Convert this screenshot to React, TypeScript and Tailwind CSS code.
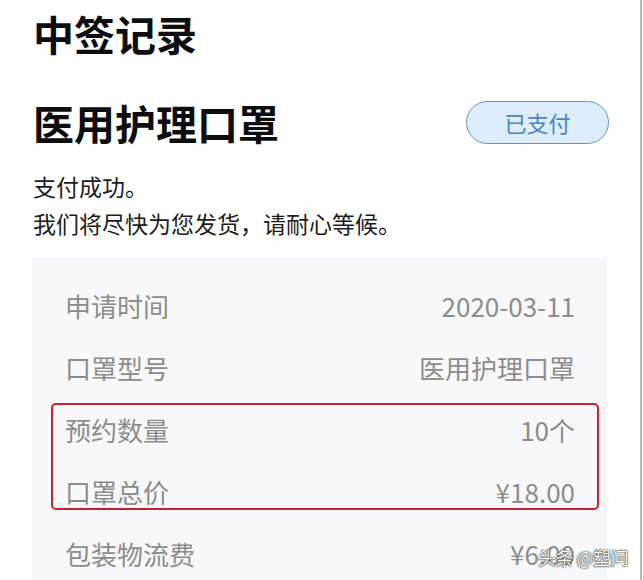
import React from 'react';

const rows = [
  { label: '申请时间', value: '2020-03-11' },
  { label: '口罩型号', value: '医用护理口罩' },
  { label: '预约数量', value: '10个' },
  { label: '口罩总价', value: '¥18.00' },
  { label: '包装物流费', value: '¥6.00' },
];

export default function App() {
  return (
    <div
      className="relative w-[643px] h-[580px] overflow-hidden bg-white"
      style={{ fontFamily: '"Noto Sans CJK SC", "Noto Sans", sans-serif' }}
    >
      {/* right edge line from the original capture */}
      <div className="absolute top-0 right-0 h-full w-[3px] bg-white">
        <div className="h-full w-[2px] bg-[#b9b9b9]" />
      </div>

      <div className="pl-[33px] pr-[34px]">
        <h1 className="pt-[10px] h-[86px] text-[41px] leading-[46px] font-bold text-[#0d0d0d]">中签记录</h1>

        <div className="flex items-center justify-between h-[72px]">
          <h2 className="text-[41px] leading-[46px] font-bold text-[#0d0d0d]">医用护理口罩</h2>
          <span className="flex items-center justify-center w-[143px] h-[43px] rounded-full border-[1.5px] border-[#5e93c6] bg-[#deedfb] text-[22px] text-[#4486c6]">
            已支付
          </span>
        </div>

        <div className="pt-[10px] text-[23px] leading-[37px] text-[#1c1c1c]">
          <p>支付成功。</p>
          <p>我们将尽快为您发货，请耐心等候。</p>
        </div>
      </div>

      <div className="relative ml-[32px] mr-[36px] mt-[16px] pt-[16px] pl-[33px] pr-[32px] bg-[#f8f8fa]">
        {rows.map((r) => (
          <div key={r.label} className="flex items-center justify-between h-[62px] text-[26px] text-[#8c8c8c]">
            <span>{r.label}</span>
            <span>{r.value}</span>
          </div>
        ))}
        {/* red highlight annotation */}
        <div className="absolute left-[19px] top-[145px] w-[548px] h-[107px] rounded-[5px] border-2 border-[#c9202b]" />
      </div>

      <div className="absolute right-[15px] bottom-[14px] text-[18px] leading-none tracking-[-0.5px] text-white [text-shadow:0_0_1px_#333,0_0_2px_#333,0_0_1px_#333]">
        头条 @塑问
      </div>
    </div>
  );
}
